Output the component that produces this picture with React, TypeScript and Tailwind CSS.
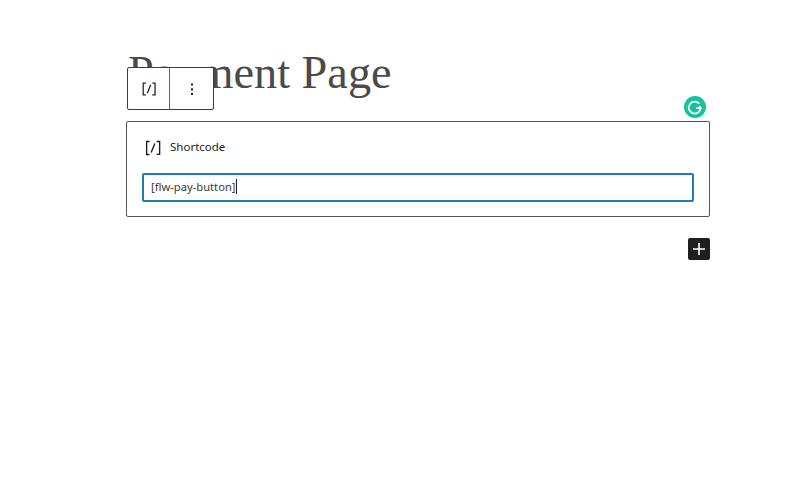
import React from 'react';

const ShortcodeIcon = ({ className }: { className?: string }) => (
  <svg viewBox="0 0 24 24" className={className} fill="currentColor">
    <path d="M16 4.200v1.500h2.500v12.500H16v1.500h4V4.200h-4zM4.200 19.800h4v-1.500H5.800V5.800h2.500V4.200h-4v15.600zm5.100-3.100l1.400.6 4-10-1.400-.6-4 10z" />
  </svg>
);

const App = () => {
  return (
    <div className="h-[496px] w-[800px] overflow-hidden bg-white font-['Noto_Sans','Open_Sans',sans-serif] text-[#1e1e1e]">
      <div className="relative ml-[126px] w-[584px] pt-[46px]">
        {/* Title */}
        <h1 className="h-[75px] pl-[2px] font-['Liberation_Serif',serif] text-[46.300px] leading-[54px] font-normal text-[#4a4a4a]">
          Payment Page
        </h1>

        {/* Block toolbar */}
        <div className="absolute top-[67px] left-[1px] flex h-[43px] w-[87px] rounded-[2px] border border-[#3c3c3c] bg-white">
          <button className="flex w-[42px] items-center justify-center border-r border-[#666]">
            <ShortcodeIcon className="h-[20px] w-[20px] text-[#222]" />
          </button>
          <button className="flex flex-1 items-center justify-center">
            <svg viewBox="0 0 24 24" className="h-6 w-6" fill="currentColor">
              <path d="M11 6.500h2v2h-2zM11 11.200h2v2h-2zM11 15.900h2v2h-2z" />
            </svg>
          </button>
        </div>

        {/* Grammarly */}
        <div className="absolute top-[96px] right-[4px] flex h-[22px] w-[22px] items-center justify-center rounded-full bg-[#15c39a]">
          <svg viewBox="0 0 22 22" className="h-[22px] w-[22px]" fill="none" stroke="white" strokeWidth="1.800">
            <path d="M15.300 7.700A6 6 0 1 0 16.700 12.200H12.300" />
            <path d="M15.800 10l.3 2.600" />
          </svg>
        </div>

        {/* Shortcode block */}
        <div className="flex h-[96px] flex-col rounded-[2px] border border-[#555] px-[15px] pt-[14px]">
          <div className="flex h-6 items-center gap-[6px] text-[11.500px] text-[#222]">
            <ShortcodeIcon className="h-[22px] w-[22px] text-[#1e1e1e]" />
            <span className="-translate-y-[1px]">Shortcode</span>
          </div>
          <div className="mt-[13px] flex h-[29px] items-center rounded-[2px] border-2 border-[#1a7fb5] pl-[7px] text-[11.200px] text-[#3a3a3a]">
            <span className="-translate-y-[1px] border-r border-[#1e1e1e] leading-[15px]">[flw-pay-button]</span>
          </div>
        </div>

        {/* Add block */}
        <div className="mt-[21px] flex justify-end">
          <button className="flex h-[22px] w-[22px] items-center justify-center rounded-[2px] bg-[#1e1e1e] text-white">
            <svg viewBox="0 0 22 22" className="h-[22px] w-[22px]" fill="currentColor">
              <path d="M10.200 5h1.600v5.200H17v1.600h-5.200V17h-1.600v-5.200H5v-1.600h5.200z" />
            </svg>
          </button>
        </div>
      </div>
    </div>
  );
};

export default App;
